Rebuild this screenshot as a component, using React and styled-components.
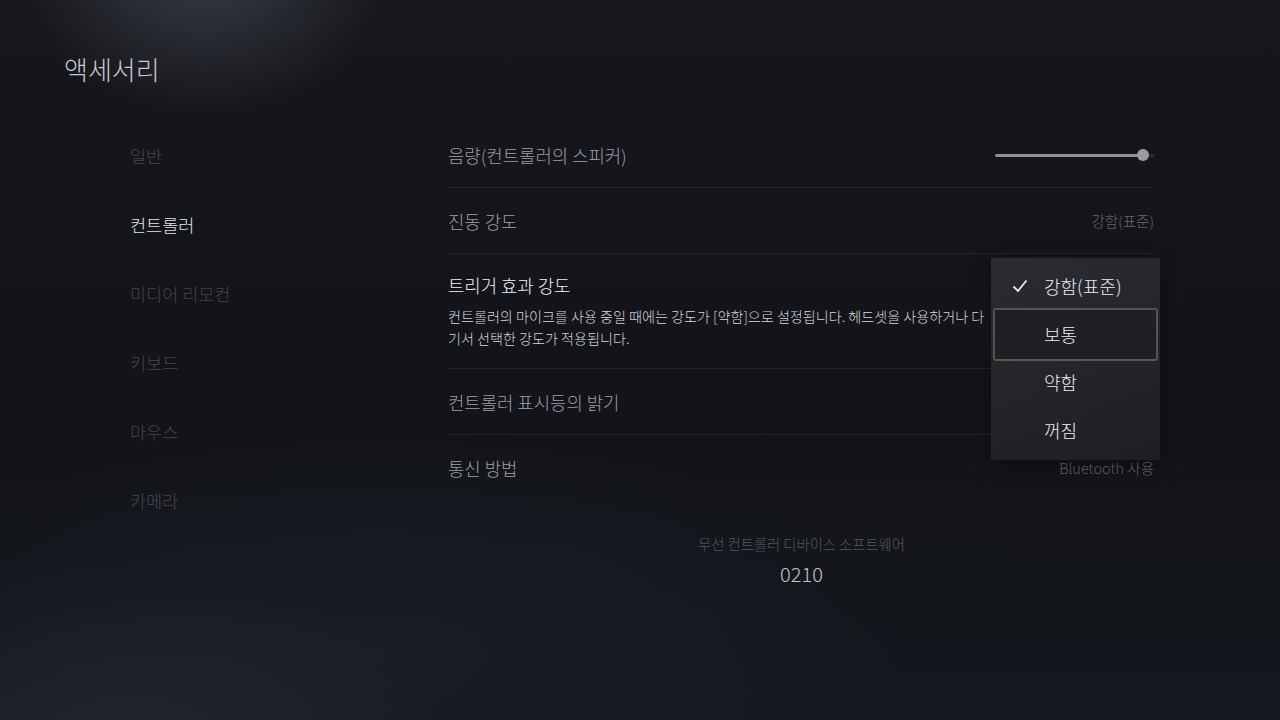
import React from 'react';
import styled, { createGlobalStyle, css } from 'styled-components';

const GlobalStyle = createGlobalStyle`
  html, body {
    margin: 0;
    padding: 0;
    background: #13151b;
  }
  body {
    font-family: "Noto Sans CJK KR", "Noto Sans", sans-serif;
    font-weight: 300;
    -webkit-font-smoothing: antialiased;
  }
`;

const Screen = styled.div`
  position: relative;
  width: 1280px;
  height: 720px;
  overflow: hidden;
  background:
    radial-gradient(ellipse 190px 150px at 205px -35px, rgba(200, 205, 215, 0.2), rgba(200, 205, 215, 0) 100%),
    radial-gradient(ellipse 340px 210px at 110px 770px, rgba(70, 76, 92, 0.28), rgba(70, 76, 92, 0) 100%),
    radial-gradient(ellipse 520px 220px at 380px 650px, rgba(36, 42, 54, 0.35), rgba(36, 42, 54, 0) 100%),
    linear-gradient(180deg, #15171d 0%, #121419 55%, #14171d 100%);
  display: flex;
  flex-direction: column;
`;

const Header = styled.header`
  height: 122px;
  padding-left: 64px;
  box-sizing: border-box;
  padding-top: 52px;
`;

const Title = styled.h1`
  margin: 0;
  font-size: 26px;
  font-weight: 300;
  line-height: 34px;
  color: #c9cacf;
`;

const Body = styled.div`
  display: grid;
  grid-template-columns: 318px 707px;
  padding-left: 130px;
`;

const Sidebar = styled.nav`
  display: flex;
  flex-direction: column;
  margin-top: -1px;
`;

const NavItem = styled.div`
  height: 69px;
  display: flex;
  align-items: center;
  font-size: 17.5px;
  color: ${({ active }) => (active ? '#e4e4e6' : '#43464d')};
`;

const Main = styled.section`
  position: relative;
  display: flex;
  flex-direction: column;
`;

const Row = styled.div`
  min-height: 66px;
  box-sizing: border-box;
  border-bottom: 1px solid ${({ last }) => (last ? 'transparent' : '#22252b')};
  display: flex;
  align-items: center;
  justify-content: space-between;
  ${({ tall }) =>
    tall &&
    css`
      display: block;
      padding: 19px 0 19px;
    `}
`;

const RowLabel = styled.div`
  font-size: 17.8px;
  line-height: 24px;
  color: ${({ bright }) => (bright ? '#f2f2f4' : '#9d9fa5')};
`;

const RowValue = styled.div`
  font-size: 14.5px;
  color: #66686e;
  padding-right: 1px;
`;

const Desc = styled.p`
  margin: 8px 0 0;
  font-size: 14.1px;
  line-height: 22px;
  color: #d6d7da;
  white-space: nowrap;
`;

const Slider = styled.div`
  position: relative;
  width: 160px;
  height: 14px;
`;

const Track = styled.div`
  position: absolute;
  left: 0;
  right: 0;
  top: 6px;
  height: 3px;
  border-radius: 2px;
  background: linear-gradient(90deg, #8d8f95 0%, #8d8f95 92.5%, #2a2c32 92.5%);
`;

const Knob = styled.div`
  position: absolute;
  left: 142px;
  top: 1px;
  width: 12px;
  height: 12px;
  border-radius: 50%;
  background: #9a9ca1;
`;

const Footer = styled.div`
  margin-top: 33px;
  display: flex;
  flex-direction: column;
  align-items: center;
  width: 707px;
`;

const FooterLabel = styled.div`
  font-size: 14.3px;
  color: #54575e;
  line-height: 20px;
`;

const FooterValue = styled.div`
  margin-top: 7px;
  font-size: 20px;
  color: #c4c5c9;
  line-height: 26px;
`;

const Menu = styled.ul`
  position: absolute;
  left: 543px;
  top: 136px;
  width: 169px;
  height: 202px;
  margin: 0;
  padding: 4px 0 6px;
  box-sizing: border-box;
  list-style: none;
  background: linear-gradient(160deg, #2a2c31 0%, #232529 55%, #1d1f24 100%);
  box-shadow: 0 6px 18px rgba(0, 0, 0, 0.35);
`;

const MenuItem = styled.li`
  position: relative;
  height: 48px;
  display: flex;
  align-items: center;
  padding-left: 53px;
  font-size: 18px;
  color: #eeeef0;

  ${({ focused }) =>
    focused &&
    css`
      &::before {
        content: '';
        position: absolute;
        left: 2px;
        right: 2px;
        top: -2px;
        bottom: -3px;
        border: 2px solid #4f535b;
        border-radius: 3px;
        background: #1e2025;
        border-bottom-color: #5b5650;
        border-left-color: #55524e;
      }
    `}
`;

const ItemText = styled.span`
  position: relative;
`;

const Check = styled.svg`
  position: absolute;
  left: 21px;
  top: 17px;
  width: 16px;
  height: 14px;
`;

const navItems = ['일반', '컨트롤러', '미디어 리모컨', '키보드', '마우스', '카메라'];
const options = ['강함(표준)', '보통', '약함', '꺼짐'];

export default function App() {
  return (
    <Screen>
      <GlobalStyle />
      <Header>
        <Title>액세서리</Title>
      </Header>
      <Body>
        <Sidebar>
          {navItems.map(item => (
            <NavItem key={item} active={item === '컨트롤러'}>
              {item}
            </NavItem>
          ))}
        </Sidebar>
        <Main>
          <Row>
            <RowLabel>음량(컨트롤러의 스피커)</RowLabel>
            <Slider>
              <Track />
              <Knob />
            </Slider>
          </Row>
          <Row>
            <RowLabel>진동 강도</RowLabel>
            <RowValue>강함(표준)</RowValue>
          </Row>
          <Row tall>
            <RowLabel bright>트리거 효과 강도</RowLabel>
            <Desc>
              컨트롤러의 마이크를 사용 중일 때에는 강도가 [약함]으로 설정됩니다. 헤드셋을 사용하거나 다
              <br />
              기서 선택한 강도가 적용됩니다.
            </Desc>
          </Row>
          <Row>
            <RowLabel>컨트롤러 표시등의 밝기</RowLabel>
            <RowValue>중간</RowValue>
          </Row>
          <Row last>
            <RowLabel>통신 방법</RowLabel>
            <RowValue>Bluetooth 사용</RowValue>
          </Row>
          <Footer>
            <FooterLabel>무선 컨트롤러 디바이스 소프트웨어</FooterLabel>
            <FooterValue>0210</FooterValue>
          </Footer>

          <Menu>
            {options.map((opt, i) => (
              <MenuItem key={opt} focused={i === 1}>
                {i === 0 && (
                  <Check viewBox="0 0 16 14">
                    <path d="M1.5 7.5 L6 12 L14.5 1.5" fill="none" stroke="#ececee" strokeWidth="1.8" />
                  </Check>
                )}
                <ItemText>{opt}</ItemText>
              </MenuItem>
            ))}
          </Menu>
        </Main>
      </Body>
    </Screen>
  );
}
